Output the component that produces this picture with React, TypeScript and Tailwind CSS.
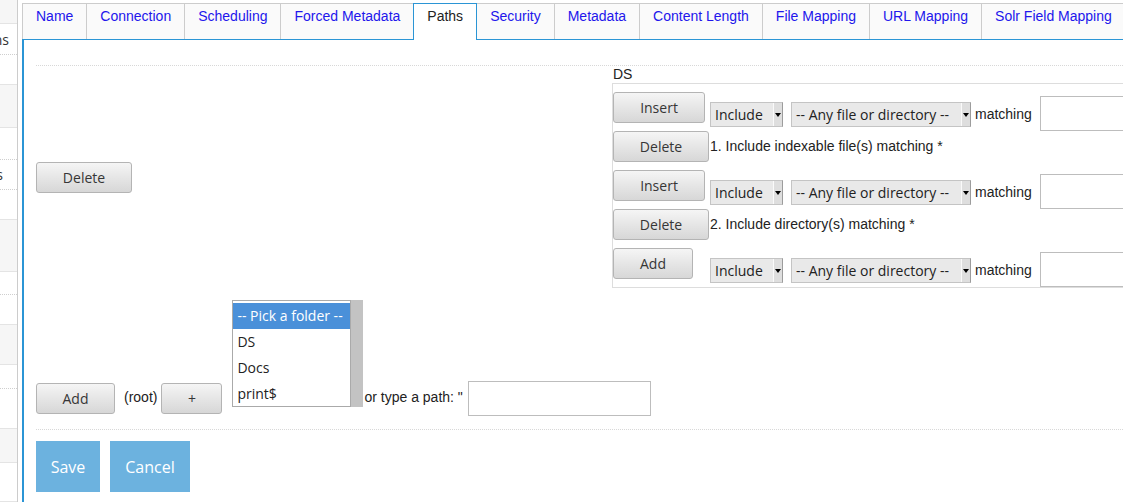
import React from "react";

const TABS = [
  "Name",
  "Connection",
  "Scheduling",
  "Forced Metadata",
  "Paths",
  "Security",
  "Metadata",
  "Content Length",
  "File Mapping",
  "URL Mapping",
  "Solr Field Mapping",
];
const ACTIVE = 4;

// sidebar rows: height, grey bg, dotted bottom, visible text tail
const SIDE_ROWS: { h: string; grey?: boolean; dotted?: boolean; text?: string; pr?: string }[] = [
  { h: "h-[24px]", grey: true },
  { h: "h-[31px]", dotted: true, text: "Connections", pr: "pr-[8px]" },
  { h: "h-[30px]" },
  { h: "h-[43px]", grey: true },
  { h: "h-[32px]", dotted: true },
  { h: "h-[30px]", dotted: true, text: "Jobs", pr: "pr-[14px]" },
  { h: "h-[30px]" },
  { h: "h-[52px]", grey: true },
  { h: "h-[23px]", dotted: true },
  { h: "h-[30px]" },
  { h: "h-[40px]", grey: true },
  { h: "h-[24px]", dotted: true },
  { h: "h-[40px]" },
  { h: "h-[34px]", grey: true },
  { h: "h-[39px]" },
];

const OPEN = "font-['Open_Sans','Noto_Sans',sans-serif]";

function Btn({ label, w }: { label: string; w: string }) {
  return (
    <button
      className={`${w} h-[31px] shrink-0 rounded-[3px] border border-[#b4b4b4] bg-linear-to-b from-[#f5f5f5] to-[#d7d7d7] text-[14px] text-[#363636] ${OPEN}`}
    >
      {label}
    </button>
  );
}

function FakeSelect({ label, w }: { label: string; w: string }) {
  return (
    <div
      className={`${w} h-[25px] flex items-stretch border border-[#c4c4c4] border-r-[#9c9c9c] bg-[#e9e9e9] text-[14px] text-[#222] ${OPEN}`}
    >
      <span className="flex-1 pl-[4px] leading-[23px] whitespace-nowrap overflow-hidden">{label}</span>
      <span className="w-[9px] flex items-center justify-center border-l border-[#fafafa] bg-[#dedede]">
        <span className="w-0 h-0 border-l-[3px] border-r-[3px] border-t-[4px] border-l-transparent border-r-transparent border-t-black" />
      </span>
    </div>
  );
}

function RuleRow({ btn, btnW }: { btn: string; btnW: string }) {
  return (
    <div className="flex items-start h-[39px]">
      <div className="w-[97px] shrink-0">
        <Btn label={btn} w={btnW} />
      </div>
      <div className="mt-[10px] flex gap-[8px]">
        <FakeSelect label="Include" w="w-[73px]" />
        <FakeSelect label="-- Any file or directory --" w="w-[180px]" />
      </div>
      <span className="ml-[4px] mt-[14px] leading-[17px] whitespace-nowrap">matching</span>
      <input className="ml-[8px] mt-[4px] w-[160px] h-[35px] shrink-0 border border-[#bdbdbd] bg-white" />
    </div>
  );
}

function DescRow({ text }: { text: string }) {
  return (
    <div className="flex items-start h-[39px]">
      <div className="w-[97px] shrink-0">
        <Btn label="Delete" w="w-[96px]" />
      </div>
      <span className="mt-[7px] leading-[17px] whitespace-nowrap">{text}</span>
    </div>
  );
}

export default function App() {
  return (
    <div className="w-[1123px] h-[502px] overflow-hidden flex bg-white text-[14px] text-[#222] font-['Liberation_Sans',Arial,sans-serif]">
      {/* left nav, mostly scrolled off */}
      <div className="w-[18px] shrink-0 border-r border-[#cccccc] flex flex-col overflow-hidden">
        {SIDE_ROWS.map((r, i) => (
          <div
            key={i}
            className={`${r.h} shrink-0 flex items-center justify-end ${r.pr ?? ""} ${r.grey ? "bg-[#f6f6f6]" : "bg-white"} border-b ${
              r.dotted ? "border-dotted border-[#cfcfcf]" : "border-[#e4e4e4]"
            } text-[#333] ${OPEN} whitespace-nowrap`}
          >
            {r.text}
          </div>
        ))}
      </div>

      <div className="ml-[4px] flex-1 min-w-0 flex flex-col pt-[3px]">
        {/* tabs */}
        <div className="flex h-[37px] shrink-0 border-b border-[#2b95d5] bg-[#fafafa]">
          {TABS.map((t, i) => {
            const active = i === ACTIVE;
            if (active)
              return (
                <div
                  key={t}
                  className="h-[37px] shrink-0 px-[13px] pt-[2px] leading-[20px] border border-b-0 border-[#2b95d5] bg-white text-[#222] whitespace-nowrap"
                >
                  {t}
                </div>
              );
            return (
              <div
                key={t}
                className={`h-[36px] shrink-0 px-[13px] pt-[2px] leading-[20px] border-t border-[#cccccc] ${
                  i === ACTIVE - 1 ? "" : "border-r"
                } ${i === 0 ? "border-l" : ""} text-[#2216ec] whitespace-nowrap`}
              >
                {t}
              </div>
            );
          })}
        </div>

        {/* paths panel */}
        <div className="flex-1 border-l-2 border-[#2b95d5] pl-[12px] pt-[25px] min-w-0">
          <div className="border-t border-dotted border-[#d8d8d8]" />

          <div className="flex">
            <div className="w-[576px] shrink-0 flex items-center">
              <Btn label="Delete" w="w-[96px]" />
            </div>
            <div className="flex flex-col">
              <div className="leading-[17px] pl-[1px]">DS</div>
              <div className="w-[620px] border border-[#dddddd] border-r-0 pt-[8px]">
                <RuleRow btn="Insert" btnW="w-[92px]" />
                <DescRow text="1. Include indexable file(s) matching *" />
                <RuleRow btn="Insert" btnW="w-[92px]" />
                <DescRow text="2. Include directory(s) matching *" />
                <RuleRow btn="Add" btnW="w-[80px]" />
              </div>
            </div>
          </div>

          {/* add path row */}
          <div className="mt-[12px] flex items-start">
            <div className="mt-[83px]">
              <Btn label="Add" w="w-[79px]" />
            </div>
            <span className="ml-[9px] mt-[89px] leading-[17px]">(root)</span>
            <div className="ml-[4px] mt-[83px]">
              <Btn label="+" w="w-[61px]" />
            </div>
            <div className={`ml-[10px] flex h-[107px] ${OPEN} text-[14px]`}>
              <div className="w-[119px] border border-[#aaaaaa] pt-[2px] overflow-hidden bg-white">
                <div className="h-[26px] leading-[26px] px-[4px] bg-[#4a90d9] text-white whitespace-nowrap">
                  -- Pick a folder --
                </div>
                <div className="h-[26px] leading-[26px] px-[4px]">DS</div>
                <div className="h-[26px] leading-[26px] px-[4px]">Docs</div>
                <div className="h-[26px] leading-[26px] px-[4px]">print$</div>
              </div>
              <div className="w-[12px] bg-[#c3c3c3]" />
            </div>
            <span className="ml-[1px] mt-[89px] leading-[17px] whitespace-nowrap">or type a path: "</span>
            <input className="ml-[5px] mt-[81px] w-[183px] h-[35px] border border-[#bdbdbd] bg-white" />
          </div>

          <div className="mt-[13px] border-t border-dotted border-[#d8d8d8]" />

          <div className={`mt-[11px] flex gap-[10px] ${OPEN}`}>
            <button className="w-[64px] h-[51px] bg-[#6cb2df] text-white text-[16px]">Save</button>
            <button className="w-[80px] h-[51px] bg-[#6cb2df] text-white text-[16px]">Cancel</button>
          </div>
        </div>
      </div>
    </div>
  );
}
